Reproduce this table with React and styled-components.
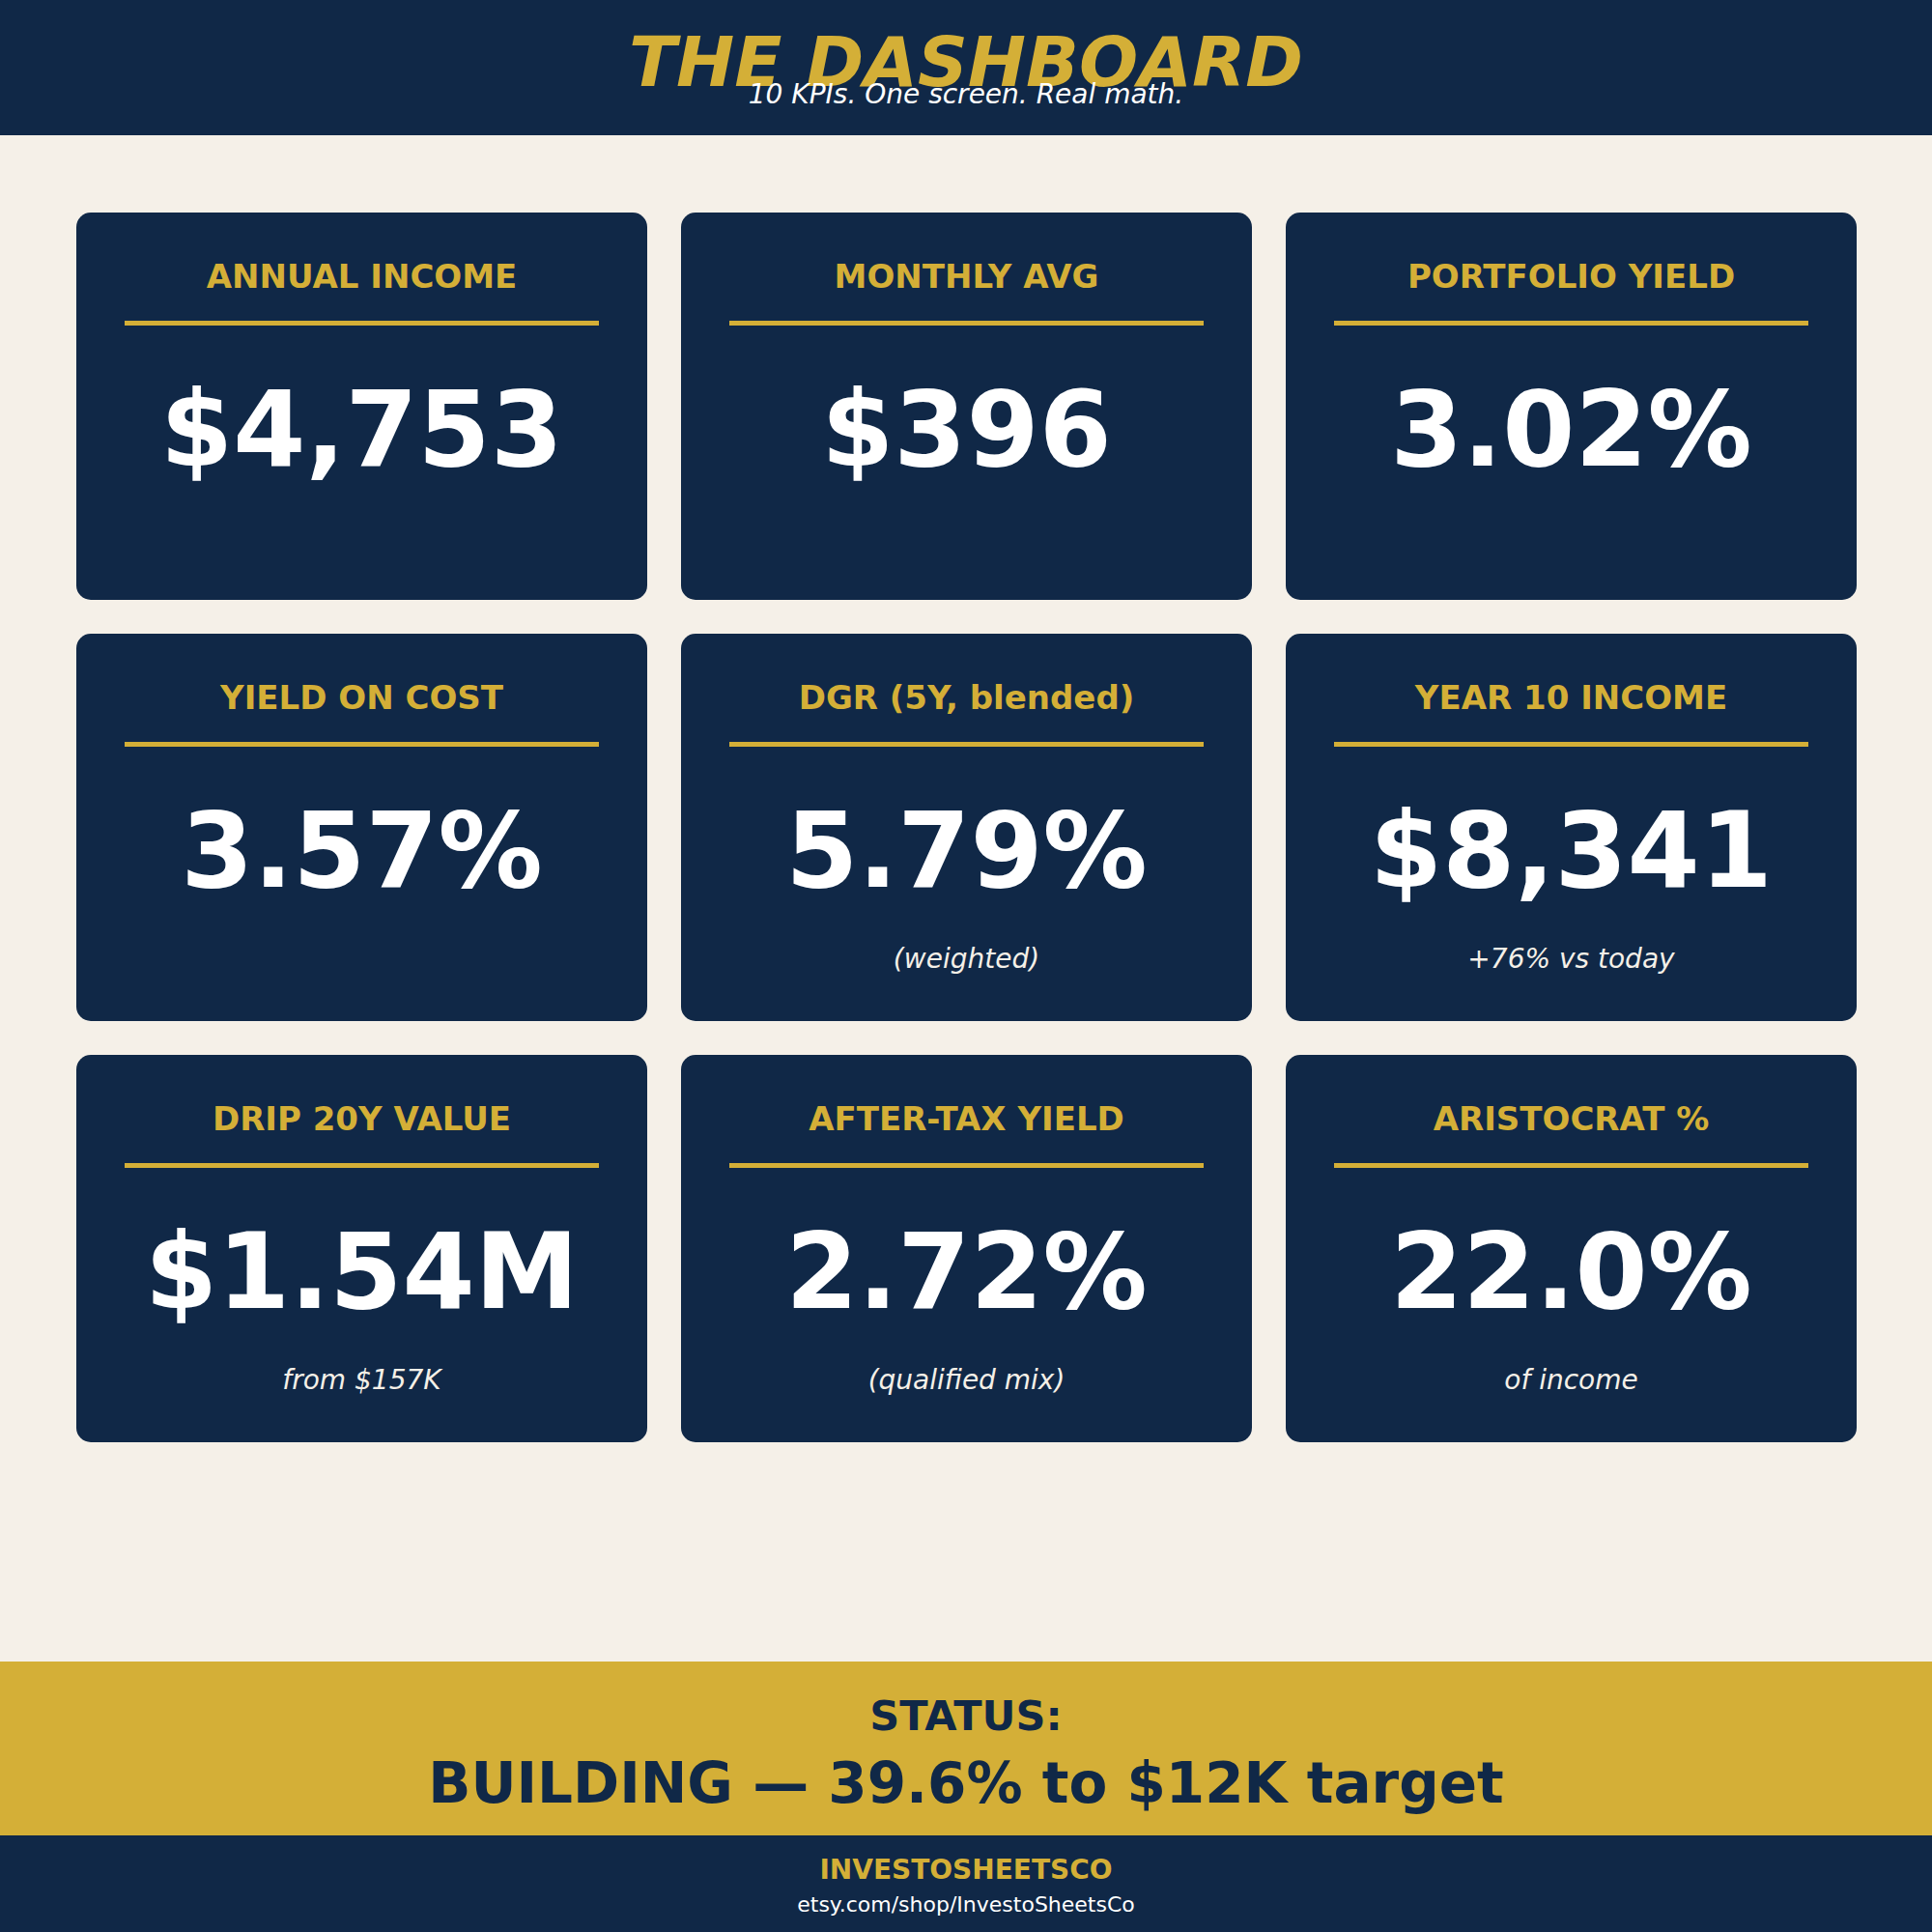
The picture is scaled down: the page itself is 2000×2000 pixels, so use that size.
import React from 'react';
import styled, { createGlobalStyle } from 'styled-components';

const NAVY = '#102847';
const GOLD = '#d4af37';
const CREAM = '#f5f0e8';

const GlobalStyle = createGlobalStyle`
  html, body {
    margin: 0;
    padding: 0;
    background: ${CREAM};
  }
  body {
    font-family: "DejaVu Sans", "Liberation Sans", sans-serif;
  }
  * {
    box-sizing: border-box;
  }
`;

// Page frame
const Page = styled.div`
  width: 2000px;
  height: 2000px;
  display: flex;
  flex-direction: column;
  background: ${CREAM};
`;

const Header = styled.header`
  height: 140px;
  flex-shrink: 0;
  background: ${NAVY};
  display: flex;
  flex-direction: column;
  align-items: center;
  padding-top: 28px;
`;

const Title = styled.h1`
  margin: 0;
  font-size: 72px;
  line-height: 72px;
  font-weight: bold;
  font-style: italic;
  color: ${GOLD};
  white-space: nowrap;
`;

// sits partly under the title, as in the original artwork
const Tagline = styled.div`
  margin-top: -16px;
  font-size: 28px;
  line-height: 28px;
  font-style: italic;
  color: #ffffff;
  white-space: nowrap;
`;

const Main = styled.main`
  flex: 1;
  padding: 80px 0 0 79px;
`;

const Grid = styled.div`
  display: grid;
  grid-template-columns: repeat(3, 591px);
  grid-auto-rows: 401px;
  column-gap: 35px;
  row-gap: 35px;
`;

// KPI card
const Card = styled.div`
  background: ${NAVY};
  border-radius: 15px;
  display: flex;
  flex-direction: column;
  align-items: center;
  padding: 46px 50px 0;
`;

const Label = styled.div`
  font-size: 34px;
  line-height: 40px;
  font-weight: bold;
  color: ${GOLD};
  white-space: nowrap;
`;

const Rule = styled.div`
  align-self: stretch;
  height: 5px;
  margin-top: 26px;
  background: ${GOLD};
`;

const Value = styled.div`
  margin-top: 54px;
  font-size: 108px;
  line-height: 108px;
  font-weight: bold;
  color: #ffffff;
  white-space: nowrap;
`;

const Note = styled.div`
  margin-top: 44px;
  font-size: 28px;
  line-height: 28px;
  font-style: italic;
  color: ${CREAM};
  white-space: nowrap;
`;

// Status band + footer
const StatusBand = styled.section`
  height: 180px;
  flex-shrink: 0;
  background: ${GOLD};
  display: flex;
  flex-direction: column;
  align-items: center;
  padding-top: 35px;
  color: ${NAVY};
  font-weight: bold;
`;

const StatusLabel = styled.div`
  font-size: 43px;
  line-height: 43px;
  white-space: nowrap;
`;

const StatusText = styled.div`
  margin-top: 19px;
  font-size: 58px;
  line-height: 58px;
  white-space: nowrap;
`;

const Footer = styled.footer`
  height: 100px;
  flex-shrink: 0;
  background: ${NAVY};
  display: flex;
  flex-direction: column;
  align-items: center;
  padding-top: 22px;
`;

const Brand = styled.div`
  font-size: 28px;
  line-height: 28px;
  font-weight: bold;
  color: ${GOLD};
`;

const ShopLink = styled.div`
  margin-top: 11px;
  font-size: 22px;
  line-height: 22px;
  color: #ffffff;
`;

const kpis = [
  { label: 'ANNUAL INCOME', value: '$4,753' },
  { label: 'MONTHLY AVG', value: '$396' },
  { label: 'PORTFOLIO YIELD', value: '3.02%' },
  { label: 'YIELD ON COST', value: '3.57%' },
  { label: 'DGR (5Y, blended)', value: '5.79%', note: '(weighted)' },
  { label: 'YEAR 10 INCOME', value: '$8,341', note: '+76% vs today' },
  { label: 'DRIP 20Y VALUE', value: '$1.54M', note: 'from $157K' },
  { label: 'AFTER-TAX YIELD', value: '2.72%', note: '(qualified mix)' },
  { label: 'ARISTOCRAT %', value: '22.0%', note: 'of income' },
];

const App = () => (
  <>
    <GlobalStyle />
    <Page>
      <Header>
        <Title>THE DASHBOARD</Title>
        <Tagline>10 KPIs. One screen. Real math.</Tagline>
      </Header>
      <Main>
        <Grid>
          {kpis.map((k) => (
            <Card key={k.label}>
              <Label>{k.label}</Label>
              <Rule />
              <Value>{k.value}</Value>
              {k.note && <Note>{k.note}</Note>}
            </Card>
          ))}
        </Grid>
      </Main>
      <StatusBand>
        <StatusLabel>STATUS:</StatusLabel>
        <StatusText>BUILDING — 39.6% to $12K target</StatusText>
      </StatusBand>
      <Footer>
        <Brand>INVESTOSHEETSCO</Brand>
        <ShopLink>etsy.com/shop/InvestoSheetsCo</ShopLink>
      </Footer>
    </Page>
  </>
);

export default App;
